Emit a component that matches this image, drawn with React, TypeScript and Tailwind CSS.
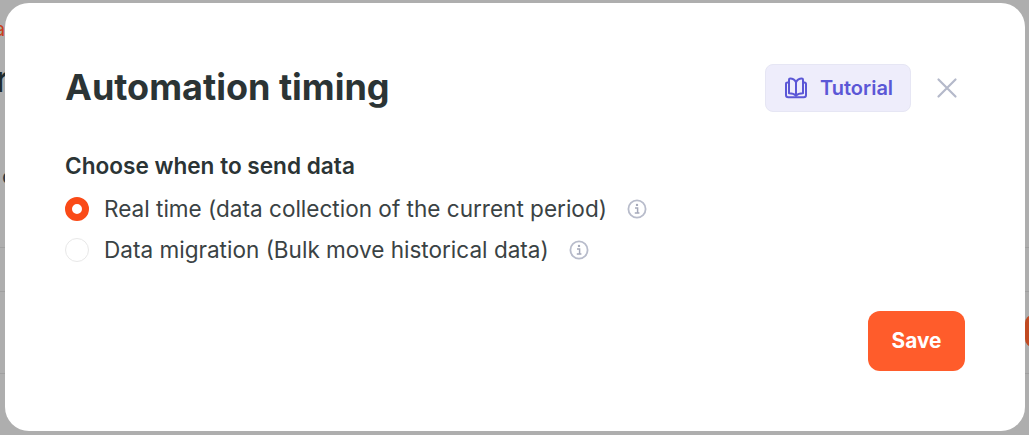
function InfoIcon() {
  return (
    <svg width="20" height="20" viewBox="0 0 20 20" fill="none" className="shrink-0">
      <circle cx="10" cy="10" r="8.6" stroke="#b8bccb" strokeWidth="1.8" />
      <circle cx="10" cy="5.9" r="1.2" fill="#a5a9ba" />
      <path d="M8 8.9h2.6v5M7.8 14.1h4.6" stroke="#a5a9ba" strokeWidth="1.5" />
    </svg>
  );
}

function BookIcon() {
  return (
    <svg width="24" height="24" viewBox="0 0 24 24" fill="none" stroke="#5b57d6" strokeWidth="2" strokeLinejoin="round" strokeLinecap="round" className="shrink-0">
      <path d="M12 6.2C10.8 4 8.6 2.6 6.2 2.6c-.7 0-1.2.5-1.2 1.2v13.4c2.9 0 5.4.7 7 2.4V6.2Z" />
      <path d="M12 6.2c1.2-2.2 3.4-3.6 5.8-3.6.7 0 1.2.5 1.2 1.2v13.4c-2.9 0-5.4.7-7 2.4V6.2Z" />
      <path d="M5 6.4H3.6c-1 0-1.6.6-1.6 1.6v11c0 1.3.9 2.2 2.2 2.2h15.6c1.3 0 2.2-.9 2.2-2.2V8c0-1-.6-1.6-1.6-1.6H19" />
    </svg>
  );
}

const options = [
  { label: "Real time (data collection of the current period)", checked: true },
  { label: "Data migration (Bulk move historical data)", checked: false },
];

export default function App() {
  return (
    <div className="relative w-[1029px] h-[435px] overflow-hidden bg-[#aeaeae] font-['Inter',sans-serif]">
      {/* page behind the overlay */}
      <span className="absolute left-[-6px] top-[14px] text-[20px] text-[#c8401c]">a</span>
      <span className="absolute left-[-5px] top-[52px] text-[36px] font-semibold text-[#1e2a2c]">r</span>
      <span className="absolute left-[2px] top-[160px] text-[22px] text-[#2a3a44]">c</span>
      <div className="absolute left-0 top-[247px] w-full h-px bg-[#a0a0a0]" />
      <div className="absolute left-0 top-[291px] w-full h-px bg-[#a0a0a0]" />
      <div className="absolute left-0 top-[373px] w-full h-px bg-[#a0a0a0]" />
      <div className="absolute left-[1025px] top-[315px] w-[20px] h-[32px] rounded-[8px] bg-[#c04a22]" />

      <div className="absolute left-[5px] top-[3px] w-[1020px] h-[428px] rounded-[24px] bg-white pl-[60px] pr-[60px] pt-[60px] flex flex-col">
        <div className="flex items-center justify-between h-[48px]">
          <h1 className="text-[36px] font-bold text-[#2b3435] leading-[48px]">Automation timing</h1>
          <div className="flex items-center mt-[2px]">
            <button className="flex items-center gap-[12px] w-[146px] h-[48px] pl-[18px] rounded-[8px] bg-[#eeedfb] border border-[#e6e6f4] text-[20px] font-semibold text-[#5b57d6]">
              <BookIcon />
              Tutorial
            </button>
            <button className="ml-[22px] mr-[4px] text-[#b4b9ca]">
              <svg width="28" height="28" viewBox="0 0 28 28" fill="none" stroke="currentColor" strokeWidth="2.2" strokeLinecap="round">
                <path d="M5.5 5.5l17 17M22.5 5.5l-17 17" />
              </svg>
            </button>
          </div>
        </div>

        <p className="mt-[40px] text-[22.6px] font-semibold leading-[30px] text-[#2b3435]">Choose when to send data</p>

        <div className="mt-[13px] flex flex-col gap-[11px]">
          {options.map((option) => (
            <div key={option.label} className="flex items-center h-[30px]">
              {option.checked ? (
                <span className="w-[24px] h-[24px] rounded-full border-[7px] border-[#fa4a17] bg-white shrink-0" />
              ) : (
                <span className="w-[24px] h-[24px] rounded-full border border-[#e8e8e8] bg-white shrink-0" />
              )}
              <span className="ml-[15px] text-[22.55px] leading-[30px] text-[#3a4244]">{option.label}</span>
              <span className="ml-[20px]">
                <InfoIcon />
              </span>
            </div>
          ))}
        </div>

        <div className="mt-[46px] flex justify-end">
          <button className="w-[97px] h-[60px] rounded-[12px] bg-[#ff5c2b] text-[20.8px] font-bold text-white">Save</button>
        </div>
      </div>
    </div>
  );
}
